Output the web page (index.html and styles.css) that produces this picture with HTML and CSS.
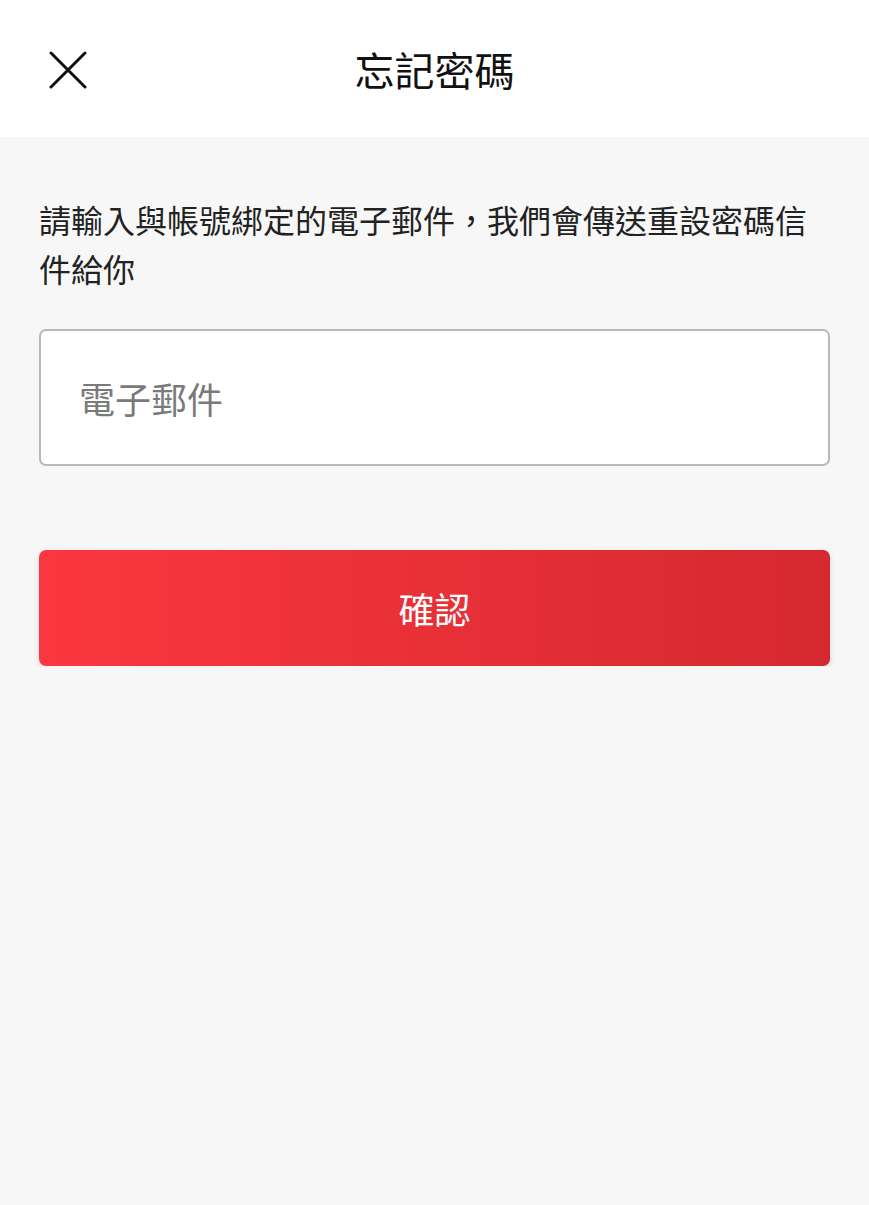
FILE: index.html
```html
<!DOCTYPE html>
<html lang="zh-Hant">
<head>
    <meta charset="UTF-8">
    <meta name="viewport" content="width=device-width, initial-scale=1.0">
    <title>忘記密碼</title>
    <link rel="stylesheet" href="styles.css">
</head>
<body>
    <header class="topbar">
        <button class="close-btn" aria-label="關閉">
            <svg width="38" height="38" viewBox="0 0 38 38">
                <path d="M2 2 L36 36 M36 2 L2 36" stroke="#111" stroke-width="3" stroke-linecap="round" fill="none"/>
            </svg>
        </button>
        <h1 class="title">忘記密碼</h1>
    </header>

    <main class="content">
        <p class="hint">請輸入與帳號綁定的電子郵件，我們會傳送重設密碼信件給你</p>
        <input type="email" class="email-input" placeholder="電子郵件">
        <button class="confirm-btn">確認</button>
    </main>
</body>
</html>
```

FILE: styles.css
```css
* {
    box-sizing: border-box;
}
body {
    margin: 0;
    background-color: #f7f7f7;
    font-family: "Noto Sans CJK TC", "Noto Sans", sans-serif;
    color: #222;
}
.topbar {
    position: relative;
    height: 137px;
    background: #fff;
    display: flex;
    align-items: center;
    justify-content: center;
}
.close-btn {
    position: absolute;
    left: 49px;
    top: 51px;
    padding: 0;
    border: none;
    background: none;
    width: 38px;
    height: 38px;
    cursor: pointer;
}
.close-btn svg {
    display: block;
}
.title {
    margin: 0;
    font-size: 40px;
    font-weight: 400;
    color: #111;
    line-height: 1;
}
.content {
    padding: 58px 39px 0 39px;
    display: flex;
    flex-direction: column;
}
.hint {
    margin: 0;
    font-size: 32px;
    line-height: 49px;
    color: #222;
}
.email-input {
    margin-top: 36px;
    height: 137px;
    width: 100%;
    border: 2px solid #b9b9b9;
    border-radius: 7px;
    background: #fff;
    padding: 0 38px;
    font-family: inherit;
    font-size: 36px;
    color: #222;
    outline: none;
}
.email-input::placeholder {
    color: #7a7a7a;
}
.confirm-btn {
    margin-top: 84px;
    height: 116px;
    width: 100%;
    border: none;
    border-radius: 7px;
    background: linear-gradient(to right, #fb373f, #d5292f);
    color: #fff;
    font-family: inherit;
    font-size: 36px;
    box-shadow: 0 3px 6px rgba(0, 0, 0, 0.12);
    cursor: pointer;
}
```
